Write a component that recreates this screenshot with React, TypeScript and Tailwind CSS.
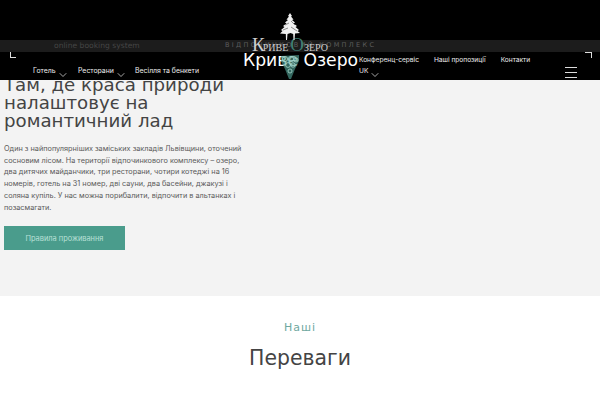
import { ChevronDown } from "lucide-react";

const sans = "font-['DejaVu_Sans',sans-serif]";
const thin = "font-['Inter',sans-serif]";

const Chevron = () => <ChevronDown className="w-[12px] h-[12px] mt-[3px] text-[#ddd]" strokeWidth={1.5} />;

const Logo = () => (
  <div className="absolute left-[242px] top-[12px] w-[118px] h-[68px]">
    <div className="absolute left-[10px] top-[24px] flex items-baseline font-['Liberation_Serif',serif] text-[10px] leading-[18px] text-[#cfcfcf] whitespace-nowrap">
      <span className="text-[19px]">К</span>
      <span className="-ml-[2px]">РИВЕ</span>
      <span className="ml-[2px] text-[19px] text-[#3f7f74]">О</span>
      <span>ЗЕРО</span>
    </div>
    <div className={`absolute left-[1px] top-[36px] ${sans} text-[17.2px] leading-[24px] text-white whitespace-nowrap`}>
      Криве Озеро
    </div>
    <svg className="absolute left-[38px] top-[1px] w-[20px] h-[28px]" viewBox="0 0 20 28">
      <path
        fill="#f0f0f0"
        d="M10 0 L12 3 L11 3.5 L13.5 6.5 L12 7 L15 9.5 L13.5 10.5 L17 13 L15.5 14 L19 17 L17.5 18 L20 20 L15 20.5 L14.5 27 L13.5 27 L13.2 21 L10.5 20 L7.5 21 L7 27 L6 27 L5.8 21 L0 20.5 L2.5 18 L1 17 L4.5 14 L3 13 L6.5 10.5 L5 9.5 L8 7 L6.5 6.5 L9 3.5 L8 3 Z"
      />
      <g stroke="#000" strokeWidth="0.6" opacity="0.7">
        <path d="M5 12 L9 10" />
        <path d="M11 8 L15 12" />
        <path d="M3 17 L8 15" />
        <path d="M11 14 L17 18" />
      </g>
    </svg>
    <svg className="absolute left-[38px] top-[42px] w-[20px] h-[26px]" viewBox="0 0 20 26">
      <path d="M1 2 L19 1 L19 7 L15 15 L11 25 L9 25 L5 15 L1 7 Z" fill="#4f9d90" fillOpacity="0.65" />
      <g fill="none" stroke="#a9d8cd" strokeWidth="1" strokeOpacity="0.8">
        <circle cx="5" cy="5" r="2.6" />
        <circle cx="11" cy="5" r="2.6" />
        <circle cx="16" cy="6" r="2" />
        <circle cx="8" cy="11" r="2.4" />
        <circle cx="13" cy="11" r="2.2" />
        <circle cx="10" cy="17" r="2" />
      </g>
    </svg>
  </div>
);

const Header = () => (
  <header className={`relative z-10 h-[80px] bg-black ${sans} text-[#eeeeee]`}>
    <div className="h-[40px]" />
    <div className="h-[12px] bg-[#1c1c1c] flex items-center relative">
      <span className="ml-[54px] text-[7.6px] text-[#454545]">online booking system</span>
      <span className="absolute left-[225px] text-[6.5px] tracking-[2.33px] text-[#5c5c5c] whitespace-nowrap">ВІДПОЧИНКОВИЙ КОМПЛЕКС</span>
    </div>
    <div className={`h-[28px] flex justify-between ${thin} leading-[10px]`}>
      <div className="pl-[10px] text-[6.9px]">
        <div className="w-[6px] h-[6px] border-l border-b border-[#ddd]" />
        <nav className="flex pl-[23px] pt-[8px]">
          <span className="flex items-start w-[45px]">Готель <span className="-ml-[1px] pl-[2px]"><Chevron /></span></span>
          <span className="flex items-start w-[57px]">Ресторани <span className="pl-[1px]"><Chevron /></span></span>
          <span>Весілля та бенкети</span>
        </nav>
      </div>
      <div className="flex w-[241px] pr-[8px] text-[6.6px]">
        <div className="flex-1 pt-[3px]">
          <div className="flex gap-[15px]">
            <span>Конференц-сервіс</span>
            <span>Наші пропозиції</span>
            <span>Контакти</span>
          </div>
          <div className="flex items-start gap-[1px] mt-px">UK <Chevron /></div>
        </div>
        <div className="flex flex-col items-end w-[27px]">
          <div className="w-[7px] h-[6px] border-t border-r border-[#ddd]" />
          <div className="flex flex-col gap-[4px] mt-[9px] self-start">
            <div className="w-[12px] h-px bg-[#ddd]" />
            <div className="w-[12px] h-px bg-[#ddd]" />
            <div className="w-[12px] h-px bg-[#ddd]" />
          </div>
        </div>
      </div>
    </div>
    <Logo />
  </header>
);

export default function App() {
  return (
    <div className={`h-[400px] overflow-hidden bg-white ${sans}`}>
      <Header />
      <section className="h-[216px] flex flex-col items-start bg-[#f3f3f3] pl-[4px]">
        <h1 className="-mt-[4px] w-[240px] text-[18.2px] leading-[18px] text-[#444]">
          Там, де краса природи налаштовує на романтичний лад
        </h1>
        <p className={`mt-[13px] w-[242px] ${thin} text-[7.3px] leading-[11.7px] text-[#5a5a5a]`}>
          Один з найпопулярніших заміських закладів Львівщини, оточений сосновим лісом. На території відпочинкового комплексу – озеро, два дитячих майданчики, три ресторани, чотири котеджі на 16 номерів, готель на 31 номер, дві сауни, два басейни, джакузі і соляна купіль. У нас можна порибалити, відпочити в альтанках і позасмагати.
        </p>
        <button className={`mt-[13px] w-[121px] h-[24px] bg-[#4a9c8c] text-[7.4px] text-[#b9e0d7] ${thin}`}>
          Правила проживання
        </button>
      </section>
      <section className="text-center pt-[25px]">
        <div className="text-[11px] leading-[14px] tracking-[1px] text-[#6fa8a0]">Наші</div>
        <h2 className="mt-[10px] text-[20.4px] leading-[26px] text-[#444]">Переваги</h2>
      </section>
    </div>
  );
}
